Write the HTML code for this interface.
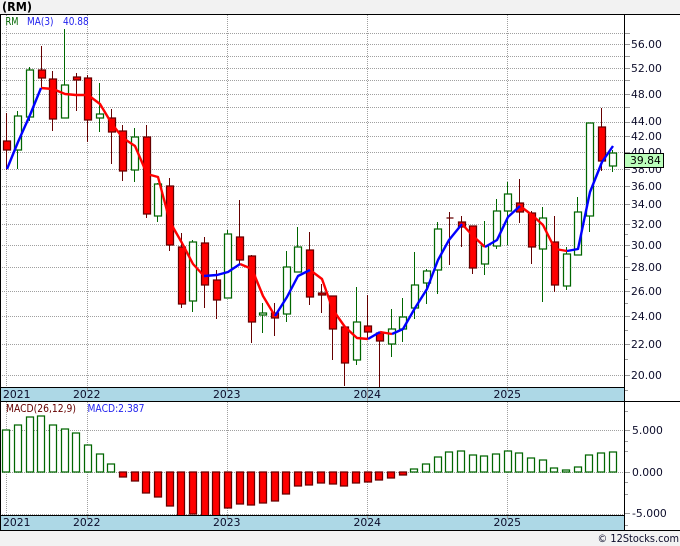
<!DOCTYPE html>
<html><head><meta charset="utf-8"><style>
html,body{margin:0;padding:0;background:#f2f2f2}
svg{display:block}
text{font-family:"DejaVu Sans","Liberation Sans",sans-serif;font-size:10.8px;fill:#0c0c2a}
.c{stroke-width:1.25}
</style></head><body>
<svg width="680" height="546" viewBox="0 0 680 546" xmlns="http://www.w3.org/2000/svg">
<rect width="680" height="546" fill="#f2f2f2"/>
<rect x="0" y="15" width="680" height="515" fill="#fff"/>
<path fill="none" stroke="#a0a0a0" stroke-dasharray="1 1" d="M2 33.5H624M2 44.5H624M2 56.5H624M2 68.5H624M2 80.5H624M2 94.5H624M2 107.5H624M2 122.5H624M2 136.5H624M2 152.5H624M2 169.5H624M2 186.5H624M2 204.5H624M2 224.5H624M2 245.5H624M2 267.5H624M2 291.5H624M2 316.5H624M2 344.5H624M2 375.5H624M2 430.5H624M2 472.5H624M2 514.5H624M6.5 15V387M87.5 15V387M227.5 15V387M367.5 15V387M507.5 15V387M6.5 402V515M87.5 402V515M227.5 402V515M367.5 402V515M507.5 402V515"/>
<path fill="none" stroke="#999" d="M625 33.5H630M625 44.5H630M625 56.5H630M625 68.5H630M625 80.5H630M625 94.5H630M625 107.5H630M625 122.5H630M625 136.5H630M625 152.5H630M625 169.5H630M625 186.5H630M625 204.5H630M625 224.5H630M625 234.5H628M625 245.5H630M625 256.5H628M625 267.5H630M625 279.5H628M625 291.5H630M625 303.5H628M625 316.5H630M625 330.5H628M625 344.5H630M625 359.5H628M625 375.5H630M625 390.5H628M625 411.5H628M625 430.5H630M625 441.5H628M625 451.5H628M625 472.5H630M625 482.5H628M625 494.5H628M625 513.5H630M625 525.5H628"/>

<path fill="none" stroke="#660000" d="M6.5 113V170M41.5 46V88M52.5 71V131M76.5 73V111M87.5 75V142M111.5 109V164M122.5 125V181M146.5 125V218M169.5 178V251M181.5 233V308M204.5 237V308M216.5 270V319M239.5 200V265M251.5 255V343M274.5 303V336M309.5 232V305M321.5 284V313M332.5 296V360M344.5 327V386M367.5 295V339M379.5 332V387M449.5 212V265M461.5 216V247M472.5 226V274M519.5 179V223M531.5 211V264M554.5 216V292M601.5 108V171"/>
<path fill="none" stroke="#006600" d="M17.5 111V169M29.5 67V121M64.5 29V118M99.5 83V132M134.5 128V182M157.5 183V222M192.5 240V312M227.5 230V298M262.5 303V333M286.5 251V322M297.5 227V272M356.5 287V365M391.5 309V357M402.5 298V342M414.5 252V319M426.5 269V304M437.5 222V294M484.5 221V275M496.5 199V249M507.5 182V245M542.5 207V302M566.5 247V290M577.5 197V255M589.5 123V232M612.5 150V172"/>
<path class="c" fill="#ff0000" stroke="#660000" d="M3.5 141h7v9h-7zM38.5 70h7v8h-7zM49.5 79h7v40h-7zM73.5 77h7v3h-7zM84.5 78h7v42h-7zM108.5 118h7v14h-7zM119.5 131h7v40h-7zM143.5 137h7v77h-7zM166.5 186h7v59h-7zM178.5 247h7v57h-7zM201.5 243h7v42h-7zM213.5 280h7v20h-7zM236.5 237h7v23h-7zM248.5 256h7v66h-7zM271.5 313h7v5h-7zM306.5 250h7v47h-7zM318.5 293h7v2h-7zM329.5 296h7v33h-7zM341.5 327h7v36h-7zM364.5 326h7v6h-7zM376.5 333h7v8h-7zM446.5 218h7zM458.5 222h7v5h-7zM469.5 226h7v42h-7zM516.5 203h7v9h-7zM528.5 213h7v34h-7zM551.5 242h7v43h-7zM598.5 127h7v34h-7z"/>
<path class="c" fill="#fff" stroke="#006600" d="M14.5 116h7v34h-7zM26.5 70h7v47h-7zM61.5 85h7v33h-7zM96.5 114h7v4h-7zM131.5 137h7v33h-7zM154.5 184h7v32h-7zM189.5 242h7v59h-7zM224.5 234h7v64h-7zM259.5 313h7v2h-7zM283.5 267h7v47h-7zM294.5 247h7v25h-7zM353.5 322h7v38h-7zM388.5 329h7v15h-7zM399.5 317h7v12h-7zM411.5 285h7v23h-7zM423.5 271h7v12h-7zM434.5 229h7v41h-7zM481.5 246h7v18h-7zM493.5 211h7v35h-7zM504.5 194h7v17h-7zM539.5 218h7v31h-7zM563.5 254h7v32h-7zM574.5 212h7v43h-7zM586.5 123h7v93h-7zM609.5 153h7v13h-7z"/>

<g fill="none" stroke-width="2.4" stroke-linejoin="round">
<path stroke="#ff0000" d="M41 88L53 89L65 94L76 95L88 95L100 104L112 124L123 138L135 146L147 174L158 177L170 222L182 243L193 264L204 276"/>
<path stroke="#ff0000" d="M240 264L252 269L263 296L275 316M310 270L322 279L333 310L345 327L357 338L368 339M380 332L392 334M462 224L473 236L485 247M520 206L532 215L543 225L555 249L567 251"/>
<path stroke="#0000ff" d="M7 169L18 142L30 115L41 88M204 276L217 275L228 272L240 264M275 316L287 297L298 276L310 270M368 339L380 332M392 334L403 329L415 308L427 289L438 260L449 240L462 224M485 247L497 240L508 217L520 206M567 251L578 249L590 192L602 162L613 146"/>
</g>

<path class="c" fill="#fff" stroke="#006600" d="M2.5 430h7v42h-7zM14.5 425h7v47h-7zM26.5 417h7v55h-7zM37.5 416h7v56h-7zM49.5 425h7v47h-7zM61.5 429h7v43h-7zM72.5 433h7v39h-7zM84.5 445h7v27h-7zM96.5 454h7v18h-7zM107.5 464h7v8h-7zM410.5 469h7v3h-7zM422.5 464h7v8h-7zM434.5 457h7v15h-7zM445.5 452h7v20h-7zM457.5 451h7v21h-7zM469.5 455h7v17h-7zM480.5 456h7v16h-7zM492.5 454h7v18h-7zM504.5 451h7v21h-7zM515.5 453h7v19h-7zM527.5 458h7v14h-7zM539.5 460h7v12h-7zM550.5 468h7v4h-7zM562.5 470h7v2h-7zM574.5 467h7v5h-7zM585.5 455h7v17h-7zM597.5 453h7v19h-7zM609.5 452h7v20h-7z"/>
<path class="c" fill="#ff0000" stroke="#660000" d="M119.5 472h7v5h-7zM131.5 472h7v9h-7zM142.5 472h7v21h-7zM154.5 472h7v25h-7zM166.5 472h7v34h-7zM177.5 472h7v44h-7zM189.5 472h7v42h-7zM201.5 472h7v44h-7zM212.5 472h7v44h-7zM224.5 472h7v36h-7zM236.5 472h7v32h-7zM247.5 472h7v33h-7zM259.5 472h7v31h-7zM271.5 472h7v29h-7zM282.5 472h7v22h-7zM294.5 472h7v14h-7zM305.5 472h7v13h-7zM317.5 472h7v11h-7zM329.5 472h7v12h-7zM340.5 472h7v14h-7zM352.5 472h7v11h-7zM364.5 472h7v10h-7zM375.5 472h7v8h-7zM387.5 472h7v6h-7zM399.5 472h7v3h-7z"/>

<rect x="0" y="387" width="624" height="14" fill="#add8e6"/>
<rect x="0" y="515" width="624" height="15" fill="#add8e6"/>
<path fill="none" stroke="#999" d="M87.5 388V391M227.5 388V391M367.5 388V401M507.5 388V391M87.5 516V519M227.5 516V519M367.5 516V519M507.5 516V519"/>
<path fill="none" stroke="#000" d="M0 14.5H680M0 387.5H624M0 401.5H680M0 515.5H624M0 530.5H680M624.5 14V531M.5 14V531"/>
<rect x="0" y="531" width="680" height="15" fill="#f2f2f2"/>

<text x="2" y="11" textLength="30" lengthAdjust="spacingAndGlyphs" style="font-weight:bold;font-size:12.5px;fill:#000">(RM)</text>
<text x="5.5" y="25" textLength="13" lengthAdjust="spacingAndGlyphs" style="fill:#006600">RM</text>
<text x="27" y="25" textLength="26.5" lengthAdjust="spacingAndGlyphs" style="fill:#2222ee">MA(3)</text>
<text x="63" y="25" textLength="25.7" lengthAdjust="spacingAndGlyphs" style="fill:#2222ee">40.88</text>
<text x="6" y="412" textLength="70" lengthAdjust="spacingAndGlyphs" style="fill:#660000">MACD(26,12,9)</text>
<text x="87.5" y="412" textLength="57" lengthAdjust="spacingAndGlyphs" style="fill:#2222ee">MACD:2.387</text>

<text x="631" y="48">56.00</text>
<text x="631" y="72">52.00</text>
<text x="631" y="98">48.00</text>
<text x="631" y="125">44.00</text>
<text x="631" y="140">42.00</text>
<text x="631" y="156">40.00</text>
<text x="631" y="173">38.00</text>
<text x="631" y="190">36.00</text>
<text x="631" y="208">34.00</text>
<text x="631" y="228">32.00</text>
<text x="631" y="249">30.00</text>
<text x="631" y="271">28.00</text>
<text x="631" y="295">26.00</text>
<text x="631" y="320">24.00</text>
<text x="631" y="348">22.00</text>
<text x="631" y="379">20.00</text>
<rect x="624.5" y="153.5" width="39" height="14" fill="#bbffbb" stroke="#000"/>
<text x="630" y="164" style="fill:#000">39.84</text>

<text x="632" y="434">5.000</text>
<text x="632" y="476">0.000</text>
<text x="632" y="517">-5.000</text>

<text x="3" y="398">2021</text>
<text x="73" y="398">2022</text>
<text x="213" y="398">2023</text>
<text x="353.5" y="398">2024</text>
<text x="493.5" y="398">2025</text>
<text x="3" y="526">2021</text>
<text x="73" y="526">2022</text>
<text x="213" y="526">2023</text>
<text x="353.5" y="526">2024</text>
<text x="493.5" y="526">2025</text>

<text x="597.5" y="542" textLength="81.5" lengthAdjust="spacingAndGlyphs">© 12Stocks.com</text>
</svg>
</body></html>
